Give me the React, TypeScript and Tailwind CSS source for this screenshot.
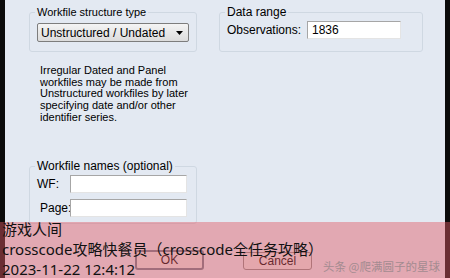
export default function App() {
  return (
    <div className="relative flex h-[278px] w-[450px] overflow-hidden bg-[#e3e9f2] text-[11px] text-black [font-family:'Liberation_Sans',Arial,sans-serif]">
      <div className="w-[5px] shrink-0 bg-[#0b0b0b]" />

      <div className="flex-1 pl-[24px] pt-[6px]">
        <div className="flex gap-[22px]">
          <fieldset className="w-[168px] rounded-[3px] border border-[#cfd8e2] px-[7px] pb-[9px] pt-[4px]">
            <legend className="-ml-[2px] px-[2px] leading-[13px]">Workfile structure type</legend>
            <div className="flex h-[19px] w-[152px] items-center justify-between rounded-[2px] border border-[#7d7d7d] bg-gradient-to-b from-[#f4f4f4] to-[#dcdcdc] pl-[3px] pr-[5px]">
              <span className="text-[12px]">Unstructured / Undated</span>
              <svg width="7" height="4" viewBox="0 0 7 4">
                <path d="M0 0h7L3.5 4z" fill="#000" />
              </svg>
            </div>
          </fieldset>

          <fieldset className="w-[204px] rounded-[3px] border border-[#cfd8e2] px-[7px] pb-[9px] pt-[2px]">
            <legend className="-ml-[2px] px-[2px] text-[12px] leading-[13px]">Data range</legend>
            <div className="flex items-center gap-[9px]">
              <span className="w-[71px] text-[12px]">Observations:</span>
              <div className="flex h-[18px] w-[94px] items-center border border-[#a6a6a6] border-b-[#e4e4e4] border-r-[#e4e4e4] bg-white pl-[4px] text-[12px]">
                1836
              </div>
            </div>
          </fieldset>
        </div>

        <p className="ml-[11px] mt-[13px] w-[160px] leading-[11.7px]">
          Irregular Dated and Panel workfiles may be made from Unstructured workfiles by later specifying date and/or other identifier series.
        </p>

        <fieldset className="mt-[36px] w-[168px] rounded-[3px] border border-[#cfd8e2] px-[7px] pb-[6px] pt-[2px]">
          <legend className="-ml-[2px] px-[2px] text-[12px] leading-[13px]">Workfile names (optional)</legend>
          <div className="flex items-center">
            <span className="w-[33px] text-[12px]">WF:</span>
            <div className="h-[18px] w-[117px] border border-[#a6a6a6] border-b-[#e4e4e4] border-r-[#e4e4e4] bg-white" />
          </div>
          <div className="mt-[6px] flex items-center">
            <span className="w-[33px] pl-[3px] text-[12px]">Page:</span>
            <div className="h-[18px] w-[117px] border border-[#a6a6a6] border-b-[#e4e4e4] border-r-[#e4e4e4] bg-white" />
          </div>
        </fieldset>

        <div className="ml-[106px] mt-[26px] flex items-start gap-[39px]">
          <button className="flex h-[20px] w-[69px] items-center justify-center rounded-[3px] border-2 border-[#6f7f8f] bg-[#e8e8e8] text-[12px]">
            OK
          </button>
          <button className="mt-[2px] flex h-[18px] w-[69px] items-center justify-center rounded-[3px] border border-[#8a8a8a] bg-[#e8e8e8] text-[12px]">
            Cancel
          </button>
        </div>
      </div>

      <div className="w-[5px] shrink-0 bg-[#0b0b0b]" />

      <div className="absolute inset-x-0 bottom-0 top-[222px] bg-[rgba(225,89,100,0.45)] pl-[2px] text-[15px] leading-[20px] text-[#111] [font-family:'Noto_Sans','Noto_Sans_CJK_SC',sans-serif]">
        <div className="-mt-[3px]">游戏人间</div>
        <div>crosscode攻略快餐员（crosscode全任务攻略）</div>
        <div>2023-11-22 12:4:12</div>
      </div>

      <div className="absolute bottom-[3px] right-[10px] text-[11.5px] text-[#a48b90] [font-family:'Noto_Sans_CJK_SC',sans-serif]">
        头条 @爬满圆子的星球
      </div>
    </div>
  );
}
